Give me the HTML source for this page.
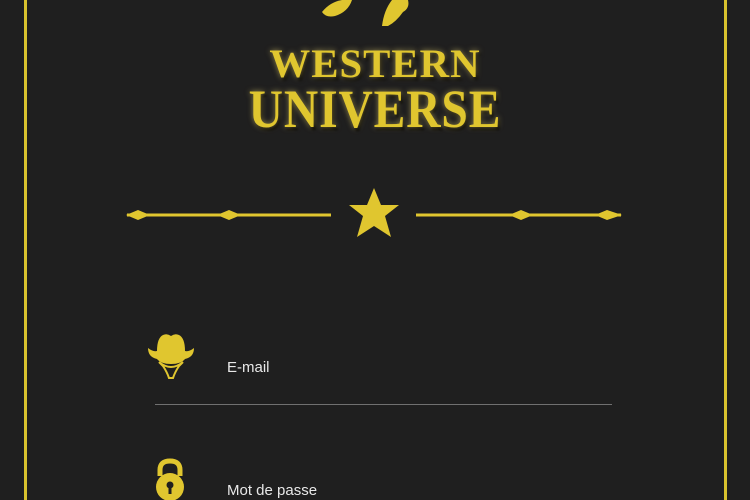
<!DOCTYPE html>
<html><head><style>
html,body{margin:0;padding:0;}
body{width:750px;height:500px;background:#1f1f1f;position:relative;overflow:hidden;font-family:"Liberation Sans",sans-serif;}
.b{position:absolute;top:0;bottom:0;width:3px;background:#d8c22e;}
.t{position:absolute;left:0;width:750px;text-align:center;color:#e0c62f;font-family:"Liberation Serif",serif;font-weight:bold;text-shadow:0 0 6px rgba(255,230,120,.55),2px 3px 3px #000;letter-spacing:1px;}
.lbl{position:absolute;color:#e8e8e8;font-size:15px;}
</style></head><body>
<div class="b" style="left:24px"></div>
<div class="b" style="left:724px"></div>
<svg style="position:absolute;left:0;top:0" width="750" height="260">
<path d="M322 12 Q330 2 342 0 L352 0 Q348 12 335 16 Q326 18 322 12Z" fill="#e0c62f"/>
<path d="M382 26 Q384 10 392 0 L408 0 Q410 8 403 12 Q396 22 388 26Z" fill="#e0c62f"/>
<g fill="#e0c62f">
<rect x="127" y="213.5" width="204" height="3"/>
<rect x="416" y="213.5" width="205" height="3"/>
<path d="M126 215 L138 210 L150 215 L138 220Z"/>
<path d="M217 215 L229 210 L241 215 L229 220Z"/>
<path d="M509 215 L521 210 L533 215 L521 220Z"/>
<path d="M595 215 L607 210 L622 215 L607 220Z"/>
<path d="M374 188 L381 205 L399 205 L385 216 L391 237 L374 226 L357 237 L363 216 L349 205 L367 205Z"/>
</g>
</svg>
<div class="t" style="top:40px;font-size:40px;transform:scaleX(1.02)">WESTERN</div>
<div class="t" style="top:78px;font-size:54px;transform:scaleX(0.88)">UNIVERSE</div>
<svg style="position:absolute;left:145px;top:332px" width="54" height="52">
<path d="M3 16 Q3 25 12 27 Q16 32 26 32 Q36 32 40 27 Q49 25 49 16 Q44 20 40 19 Q40 6 34 3 Q30 1 26 4 Q22 1 18 3 Q12 6 12 19 Q8 20 3 16Z" fill="#e0c62f"/>
<path d="M14 30 Q26 40 38 30 L34 34 Q30 40 28 46 L24 46 Q22 40 18 34Z" fill="none" stroke="#e0c62f" stroke-width="2"/>
</svg>
<div class="lbl" style="left:227px;top:359px">E-mail</div>
<div style="position:absolute;left:155px;top:404px;width:457px;height:1px;background:#707070"></div>
<svg style="position:absolute;left:150px;top:456px" width="40" height="44">
<path d="M10 20 V14 Q10 5 20 5 Q30 5 30 14 V20" fill="none" stroke="#e0c62f" stroke-width="5"/>
<circle cx="20" cy="31" r="14" fill="#e0c62f"/>
<circle cx="20" cy="29" r="3.5" fill="#1f1f1f"/>
<rect x="18.5" y="29" width="3" height="9" fill="#1f1f1f"/>
</svg>
<div class="lbl" style="left:227px;top:482px">Mot de passe</div>
</body></html>
